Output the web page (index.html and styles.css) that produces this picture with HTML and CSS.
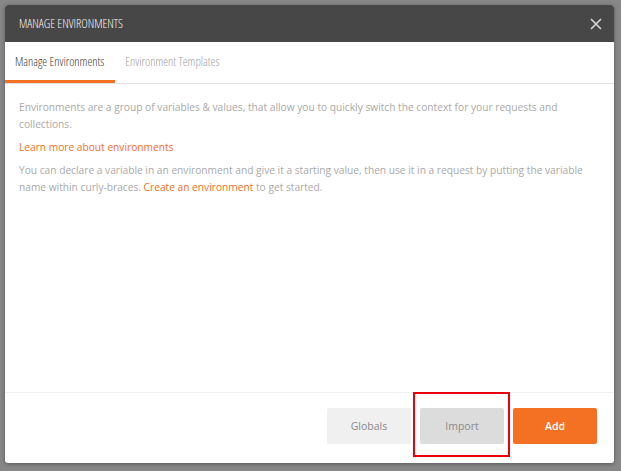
FILE: index.html
```html
<!DOCTYPE html>
<html lang="en">
<head>
<meta charset="UTF-8">
<meta name="viewport" content="width=device-width, initial-scale=1.0">
<title>Manage Environments</title>
<link rel="stylesheet" href="styles.css">
</head>
<body>

<div class="modal">
  <div class="modal-header">
    <span class="modal-title">MANAGE ENVIRONMENTS</span>
    <span class="modal-close">
      <svg width="12" height="12" viewBox="0 0 12 12"><path d="M1 1 L11 11 M11 1 L1 11" stroke="#d6d6d6" stroke-width="1.6" fill="none"/></svg>
    </span>
  </div>

  <div class="tabs">
    <div class="tab active">Manage Environments</div>
    <div class="tab">Environment Templates</div>
  </div>

  <div class="modal-body">
    <p>Environments are a group of variables &amp; values, that allow you to quickly switch the context for your requests and collections.</p>
    <p><a href="#">Learn more about environments</a></p>
    <p>You can declare a variable in an environment and give it a starting value, then use it in a request by putting the variable name within curly-braces. <a href="#">Create an environment</a> to get started.</p>
  </div>

  <div class="modal-footer">
    <button class="btn btn-light">Globals</button>
    <span class="highlight"><button class="btn btn-grey">Import</button></span>
    <button class="btn btn-orange">Add</button>
  </div>
</div>

</body>
</html>
```

FILE: styles.css
```css
body {
  margin: 0;
  background: #878787;
  font-family: "Open Sans", "Noto Sans", sans-serif;
  height: 471px;
  overflow: hidden;
}

.modal {
  margin: 5px 0 0 5px;
  width: 609px;
  height: 458px;
  background: #fff;
  border-radius: 3px;
  box-shadow: 0 1px 4px rgba(0, 0, 0, 0.35);
  display: flex;
  flex-direction: column;
  overflow: hidden;
}

.modal-header {
  height: 37px;
  flex-shrink: 0;
  background: #474747;
  display: flex;
  align-items: center;
  justify-content: space-between;
  padding: 0 12px 0 14px;
}

.modal-title {
  color: #f4f4f4;
  font-size: 12.3px;
  font-stretch: 80%;
  font-weight: 300;
}

.modal-close {
  display: flex;
}

.tabs {
  display: flex;
  height: 40px;
  flex-shrink: 0;
  border-bottom: 1px solid #e2e2e2;
  padding-top: 1px;
}

.tab {
  font-size: 12.3px;
  font-stretch: 80%;
  font-weight: 300;
  color: #a0a0a0;
  padding: 0 11px 0 10px;
  display: flex;
  align-items: center;
  border-bottom: 3px solid transparent;
}

.tab.active {
  color: #3c3c3c;
  border-bottom-color: #f47023;
}

.modal-body {
  flex: 1;
  padding: 15px 14px 0 14px;
  font-size: 10.2px;
  line-height: 17px;
  color: #a9a9a9;
}

.modal-body p {
  margin: 0 0 6px 0;
}

.modal-body a {
  color: #f47023;
  text-decoration: none;
}

.modal-footer {
  height: 55px;
  flex-shrink: 0;
  border-top: 1px solid #efefef;
  display: flex;
  align-items: flex-start;
  justify-content: flex-end;
  padding: 15px 17px 0 0;
  gap: 9px;
}

.btn {
  width: 84px;
  height: 36px;
  border: none;
  border-radius: 2px;
  font-family: "Open Sans", "Noto Sans", sans-serif;
  font-size: 10.5px;
  cursor: pointer;
}

.btn-light {
  background: #f0f0f0;
  color: #8a8a8a;
}

.btn-grey {
  background: #dcdcdc;
  color: #8a8a8a;
}

.btn-orange {
  background: #f47023;
  color: #fff;
  font-weight: 600;
}

.highlight {
  display: flex;
  border: 2px solid #e8000b;
  padding: 14px 4px 11px 5px;
  margin: -16px -6px 0 -7px;
}
```
